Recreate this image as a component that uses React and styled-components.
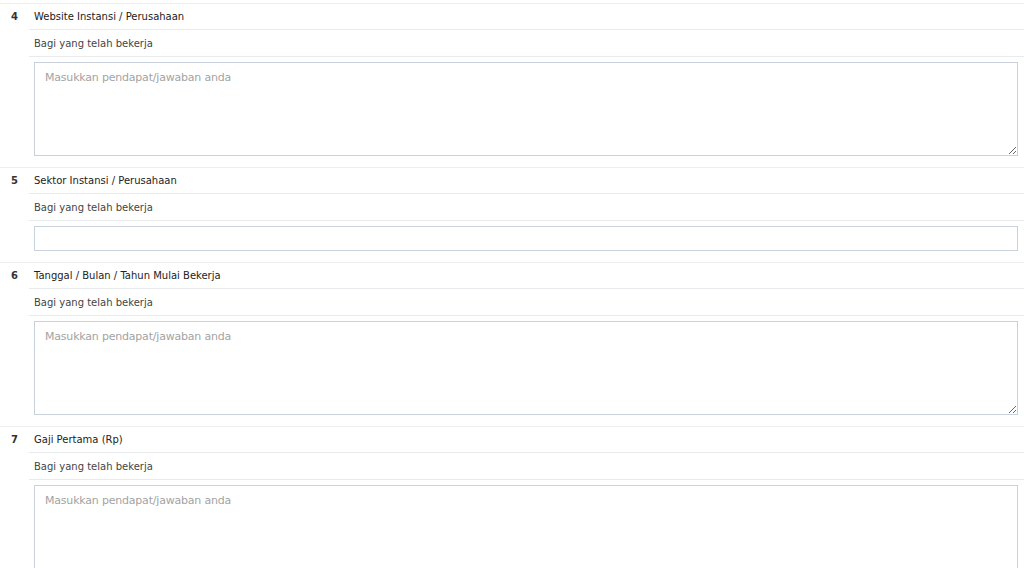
import React from "react"
import styled, { createGlobalStyle } from "styled-components"

const GlobalStyle = createGlobalStyle`
    html, body {
        margin: 0;
        padding: 0;
        background: #fff;
    }
    body {
        font-family: "DejaVu Sans", Verdana, sans-serif;
        color: #333;
    }
`

const Page = styled.div`
    padding-top: 3px;
    width: 1024px;
    overflow: hidden;
`

const Question = styled.div`
    display: grid;
    grid-template-columns: 29px 1fr;
    border-top: 1px solid #eceef0;
`

const Number = styled.div`
    padding: 7px 0 0 11px;
    font-size: 10px;
    font-weight: bold;
    color: #333;
`

const Content = styled.div`
    display: flex;
    flex-direction: column;
`

const TitleRow = styled.div`
    height: 25px;
    display: flex;
    align-items: center;
    padding-left: 5px;
    font-size: 10px;
    color: #222;
    border-bottom: 1px solid #e8eaed;
`

const DescRow = styled.div`
    height: 26px;
    display: flex;
    align-items: center;
    padding-left: 5px;
    font-size: 10px;
    color: #444;
    border-bottom: 1px solid #e8eaed;
`

const FieldRow = styled.div`
    padding: 5px 6px ${p => p.$bottom}px 5px;
    display: flex;
`

const TextArea = styled.textarea`
    box-sizing: border-box;
    width: 100%;
    height: 94px;
    border: 1px solid #c9d1dd;
    border-radius: 0;
    padding: 8px 10px;
    font-family: "DejaVu Sans", Verdana, sans-serif;
    font-size: 11px;
    letter-spacing: -0.2px;
    color: #333;
    resize: vertical;
    outline: none;
    &::placeholder {
        color: #a3a3a3;
    }
`

const Input = styled.input`
    box-sizing: border-box;
    width: 100%;
    height: 25px;
    border: 1px solid #c9d1dd;
    border-radius: 0;
    padding: 0 10px;
    font-family: "DejaVu Sans", Verdana, sans-serif;
    font-size: 11px;
    outline: none;
`

const questions = [
    { no: 4, title: "Website Instansi / Perusahaan", type: "area" },
    { no: 5, title: "Sektor Instansi / Perusahaan", type: "input" },
    { no: 6, title: "Tanggal / Bulan / Tahun Mulai Bekerja", type: "area" },
    { no: 7, title: "Gaji Pertama (Rp)", type: "area" },
]

const App = () => <>
    <GlobalStyle />
    <Page>
        {questions.map(q => <Question key={q.no}>
            <Number>{q.no}</Number>
            <Content>
                <TitleRow>{q.title}</TitleRow>
                <DescRow>Bagi yang telah bekerja</DescRow>
                {q.type === "area"
                    ? <FieldRow $bottom={11}><TextArea placeholder="Masukkan pendapat/jawaban anda" /></FieldRow>
                    : <FieldRow $bottom={11}><Input /></FieldRow>}
            </Content>
        </Question>)}
    </Page>
</>

export default App
